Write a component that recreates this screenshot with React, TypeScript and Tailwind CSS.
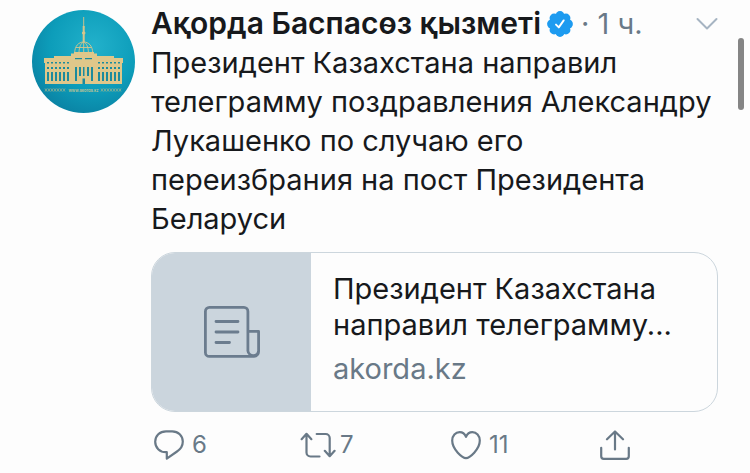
import React from 'react';

const windowColumns = [15, 19, 23, 27, 31, 35, 66, 70, 74, 78, 82, 86];
const ornaments = [14, 17, 20, 23, 26, 29, 32, 70, 73, 76, 79, 82, 85, 88];

const Avatar = () => (
  <svg viewBox="0 0 103 103" className="w-full" role="img" aria-label="Ақорда">
    <defs>
      <radialGradient id="sky" cx="0.6" cy="0.35" r="0.7">
        <stop offset="0" stopColor="#22b1cb" />
        <stop offset="0.6" stopColor="#0d9dba" />
        <stop offset="1" stopColor="#0a82a3" />
      </radialGradient>
    </defs>
    <circle cx="51.5" cy="51.5" r="51.5" fill="url(#sky)" />
    {/* Spire and dome */}
    <g stroke="#d9c58a" fill="none" strokeWidth="0.9">
      <path d="M51.7 7v11" strokeWidth="0.9" />
      <path d="M51.7 16v16" strokeWidth="2" />
      <circle cx="51.7" cy="23" r="1.3" fill="#d9c58a" />
      <path d="M42.7 43c0-7 4-11 9-11s9 4 9 11M47 43c0-6 2-10 4.7-11 2.7 1 4.7 5 4.7 11M51.7 32v11M44 37.5h15.4" />
    </g>
    {/* Palace */}
    <g fill="#dfc78a">
      <path d="M22 47v-1h17v-2.500h3V42h20v1.500h3V46h17v2h9v5h-1v21H13V53h-1v-5h10z" />
    </g>
    <g fill="#1c8b9d">
      {windowColumns.map((x) => (
        <g key={x}>
          <rect x={x} y="52" width="2" height="1.5" />
          <rect x={x} y="57" width="2" height="2" />
          <rect x={x} y="62" width="2" height="9" />
        </g>
      ))}
      <rect x="43" y="48" width="7" height="1.2" />
      <rect x="53" y="48" width="7" height="1.2" />
      <rect x="43" y="57" width="2" height="14" />
      <rect x="47" y="57" width="2" height="9" />
      <rect x="51" y="57" width="1.5" height="9" />
      <rect x="55" y="57" width="2" height="9" />
      <rect x="59" y="57" width="2" height="14" />
      <rect x="50.5" y="68.5" width="2.5" height="5.5" />
    </g>
    {/* Caption */}
    <g stroke="#a9b68d" strokeWidth="0.7" fill="none">
      {ornaments.map((x) => (
        <path key={x} d={`M${x - 1} 78.500l2 3m0-3l-2 3`} />
      ))}
    </g>
    <text x="51.5" y="81.5" textAnchor="middle" fill="#c3c493" className="font-['Inter',sans-serif] text-[4px] font-semibold">
      www.akorda.kz
    </text>
  </svg>
);

const lobes = [0, 45, 90, 135, 180, 225, 270, 315];

const VerifiedBadge = () => (
  <svg viewBox="0 0 26 26" className="size-[26px] shrink-0" role="img" aria-label="Verified">
    <g fill="#1d9bf0">
      <circle cx="13" cy="13" r="10.8" />
      {lobes.map((angle) => (
        <circle key={angle} cx="13" cy="4.6" r="4.5" transform={`rotate(${angle} 13 13)`} />
      ))}
    </g>
    <path d="M9 13.6l2.8 2.8 4.9-7" fill="none" stroke="#fff" strokeWidth="1.9" strokeLinecap="round" strokeLinejoin="round" />
  </svg>
);

const ArticleIcon = () => (
  <svg viewBox="0 0 56 52" className="h-[52px] w-14" fill="none" stroke="#6b7c8e" strokeWidth="2.8" strokeLinecap="round" strokeLinejoin="round" aria-hidden="true">
    <path d="M50 50.400H5.400a4 4 0 0 1-4-4V5.400a4 4 0 0 1 4-4h34.500a4 4 0 0 1 4 4v39.500a5.400 5.400 0 0 0 10.700 0V25.400H43.900M50 50.400a5 5 0 0 0 4.600-5" />
    <path d="M12 15.500h22M12 26h22M12 36.500h13.500" />
  </svg>
);

const iconProps = {
  fill: 'none',
  stroke: '#697987',
  strokeWidth: 2.2,
  strokeLinecap: 'round',
  strokeLinejoin: 'round',
  'aria-hidden': true,
} as const;

const ReplyIcon = () => (
  <svg viewBox="0 0 30 30" className="size-[30px]" {...iconProps}>
    <path d="M12.800 22.200h-1C5.700 22.200 1.200 17.700 1.200 11.800 1.200 5.700 5.800 1.300 12 1.300h6.200c6 0 10.600 4.500 10.600 10.300 0 4.200-2.200 7.600-5.800 9.900l-10.200 7.100z" />
  </svg>
);

const RetweetIcon = () => (
  <svg viewBox="0 0 36 30" className="h-[30px] w-9" {...iconProps}>
    <path d="M1.600 9.200l4.900-5.400 4.900 5.400M6.500 4v18.500a4 4 0 0 0 4 4h9" />
    <path d="M34.600 20.800l-4.900 5.400-4.900-5.400M29.700 26V8a4 4 0 0 0-4-4h-9" />
  </svg>
);

const HeartIcon = () => (
  <svg viewBox="0 0 30 30" className="size-[30px]" {...iconProps}>
    <path d="M15 28.200C11.500 28.200 1.200 19.500 1.200 10.600 1.200 5.600 4.600 2.200 8.600 2.200c3 0 5.200 1.800 6.400 4.700 1.200-2.900 3.400-4.700 6.400-4.700 4 0 7.400 3.400 7.400 8.400 0 8.900-10.300 17.600-13.800 17.600z" />
  </svg>
);

const ShareIcon = () => (
  <svg viewBox="0 0 30 30" className="size-[30px]" {...iconProps}>
    <path d="M15 19.500V1.500M7 9.300l8-7.800 8 7.800M1.200 17.800v8.500a2.500 2.500 0 0 0 2.500 2.500h22.600a2.500 2.500 0 0 0 2.500-2.500v-8.500" />
  </svg>
);

const App = () => {
  const actions = [
    { label: 'Reply', icon: <ReplyIcon />, count: 6, gap: 'gap-2' },
    { label: 'Retweet', icon: <RetweetIcon />, count: 7, gap: 'gap-1' },
    { label: 'Like', icon: <HeartIcon />, count: 11, gap: 'gap-2' },
    { label: 'Share', icon: <ShareIcon />, count: null, gap: 'gap-2' },
  ];

  return (
    <main className="relative min-h-screen bg-[#fdfdfd] font-['Inter',sans-serif] text-[29px] text-[#17191c]">
      <article className="flex gap-4 px-8 pt-1">
        <a href="#profile" className="mt-[6px] w-[103px] shrink-0 self-start">
          <Avatar />
        </a>

        <div className="min-w-0 flex-1">
          <header className="flex items-center leading-[39px]">
            <h1 className="truncate text-[30px] font-semibold">Ақорда Баспасөз қызметі</h1>
            <span className="ml-[6px] flex items-center gap-2 whitespace-nowrap text-[#697987]">
              <VerifiedBadge />
              <span>· 1 ч.</span>
            </span>
            <button type="button" aria-label="More" className="ml-auto">
              <svg viewBox="0 0 22 14" className="h-[14px] w-[22px]" fill="none" stroke="#a6b4c2" strokeWidth="2" strokeLinecap="round" strokeLinejoin="round">
                <path d="M1.500 2l9.500 9.500L20.500 2" />
              </svg>
            </button>
          </header>

          <p className="leading-[39px]">
            Президент Казахстана направил телеграмму поздравления Александру Лукашенко по случаю его переизбрания на пост Президента Беларуси
          </p>

          {/* Link preview */}
          <a href="#article" className="mt-[14px] flex h-40 overflow-hidden rounded-3xl border border-[#ccd6dd]">
            <div className="flex w-[159px] shrink-0 items-center justify-center bg-[#cbd5dd]">
              <ArticleIcon />
            </div>
            <div className="flex min-w-0 flex-1 flex-col justify-center gap-2 px-[22px] pb-[6px] leading-9">
              <p>Президент Казахстана направил телеграмму...</p>
              <p className="text-[#697987]">akorda.kz</p>
            </div>
          </a>

          <div className="mt-[17px] grid grid-cols-[146px_151px_149px_auto] px-[3px] text-2xl text-[#697987]">
            {actions.map((action) => (
              <button key={action.label} type="button" aria-label={action.label} className={`flex items-center ${action.gap}`}>
                {action.icon}
                {action.count !== null && <span>{action.count}</span>}
              </button>
            ))}
          </div>
        </div>
      </article>

      {/* Scroll thumb */}
      <div className="absolute right-[6px] top-[38px] h-[72px] w-[6px] rounded-full bg-[#858585]" />
    </main>
  );
};

export default App;
